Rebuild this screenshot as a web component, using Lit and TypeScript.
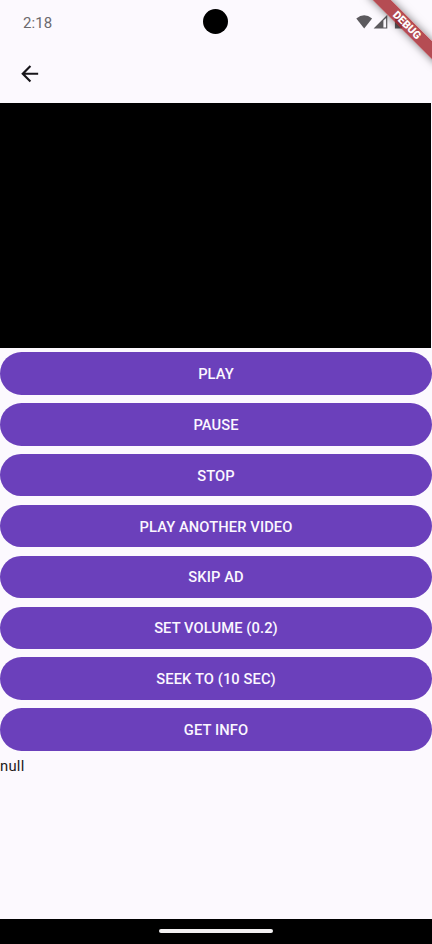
import { LitElement, html, css } from "lit";
import { customElement } from "lit/decorators.js";

@customElement("app-root")
class AppRoot extends LitElement {
  static styles = css`
    :host {
      display: flex;
      flex-direction: column;
      position: relative;
      height: 944px;
      overflow: hidden;
      background: #fcf9fe;
      font-family: Roboto, "Noto Sans", sans-serif;
      color: #1d1b20;
    }
    .status {
      display: flex;
      justify-content: space-between;
      height: 44px;
      flex: none;
      position: relative;
    }
    .time {
      padding-left: 23px;
      line-height: 47px;
      font-size: 15px;
      letter-spacing: 0.1px;
      color: #6b696d;
    }
    .camera {
      position: absolute;
      left: 203px;
      top: 9px;
      width: 25.4px;
      height: 25.4px;
      border-radius: 50%;
      background: #000;
    }
    .icons {
      width: 76px;
      height: 44px;
    }
    .bar {
      height: 59px;
      flex: none;
      display: flex;
      align-items: center;
      padding-left: 16.6px;
    }
    .bar svg {
      width: 25.4px;
      height: 25.4px;
    }
    .video {
      flex: none;
      width: 431px;
      height: 245px;
      background: #000;
    }
    .list {
      flex: 1;
      display: flex;
      flex-direction: column;
      gap: 8.55px;
      padding-top: 4.4px;
    }
    .btn {
      flex: none;
      box-sizing: border-box;
      height: 42.3px;
      border: 0;
      padding: 1px 0 0;
      border-radius: 22px;
      background: #6b40bb;
      color: #fbf7ff;
      font: 500 14.7px/40px Roboto, "Noto Sans", sans-serif;
      letter-spacing: 0.1px;
      text-align: center;
    }
    .info {
      font-size: 14.8px;
      line-height: 21px;
      letter-spacing: 0.26px;
      margin-top: -3px;
    }
    .nav {
      flex: none;
      height: 25px;
      background: #000;
      display: flex;
      justify-content: center;
      align-items: center;
    }
    .handle {
      width: 114px;
      height: 4px;
      border-radius: 2px;
      background: #f3f1f2;
      margin-top: -1px;
    }
    .ribbon {
      position: absolute;
      right: 0;
      top: 0;
      width: 80px;
      height: 80px;
      overflow: hidden;
    }
    .band {
      position: absolute;
      left: 30px;
      top: 28.8px;
      width: 100px;
      height: 12.7px;
      transform-origin: 50px -28.8px;
      transform: rotate(45deg);
      background: rgba(163, 32, 40, 0.8);
      box-shadow: 0 0 8px rgba(0, 0, 0, 0.5);
      color: #fff;
      font-size: 10.8px;
      font-weight: 900;
      line-height: 13px;
      text-align: center;
    }
  `;

  private labels = [
    "PLAY",
    "PAUSE",
    "STOP",
    "PLAY ANOTHER VIDEO",
    "SKIP AD",
    "SET VOLUME (0.2)",
    "SEEK TO (10 SEC)",
    "GET INFO",
  ];

  render() {
    return html`
      <div class="status">
        <div class="time">2:18</div>
        <div class="camera"></div>
        <svg class="icons" viewBox="0 0 76 44" fill="#5c5a5e">
          <path d="M8.2 28.4 L0.3 18.4 Q8.2 12 16.1 18.4 Z" />
          <path
            fill-rule="evenodd"
            d="M31.3 14.8 V28.5 H17.6 Z M27.4 20.6 V27.6 H30.1 V17.9 Z"
          />
          <path d="M38.9 16.6 H41 V15.2 H44 V16.6 H46.2 V28.5 H38.9 Z" />
        </svg>
      </div>
      <div class="bar">
        <svg viewBox="0 0 24 24" fill="#17151a">
          <path d="M20 11H7.83l5.59-5.59L12 4l-8 8 8 8 1.41-1.41L7.83 13H20v-2z" />
        </svg>
      </div>
      <div class="video"></div>
      <div class="list">
        ${this.labels.map((l) => html`<button class="btn">${l}</button>`)}
        <div class="info">null</div>
      </div>
      <div class="nav"><div class="handle"></div></div>
      <div class="ribbon"><div class="band">DEBUG</div></div>
    `;
  }
}
